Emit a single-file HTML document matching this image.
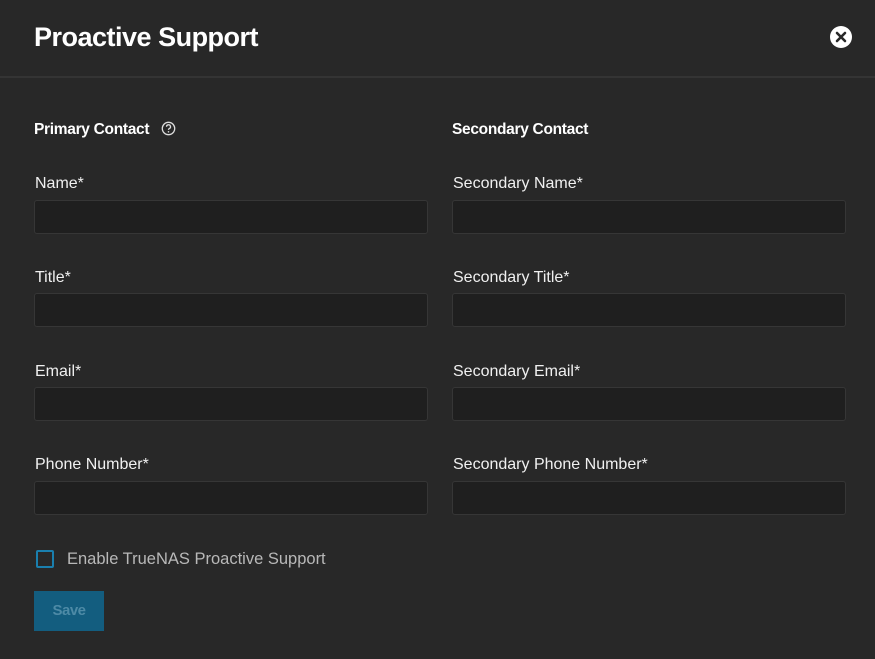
<!DOCTYPE html>
<html><head><style>
*{box-sizing:border-box;margin:0;padding:0}
body{width:875px;height:659px;background:#282828;font-family:"Liberation Sans",sans-serif;color:#fff;position:relative;overflow:hidden}
.h{position:absolute;left:34px;top:22px;font-size:27px;font-weight:bold;letter-spacing:-0.5px}
.line{position:absolute;left:0;top:76px;width:875px;height:2px;background:#343434}
.close{position:absolute;left:830px;top:26px;width:22px;height:22px}
.sec{position:absolute;top:121px;font-size:15.5px;font-weight:bold;letter-spacing:-0.3px}
.lbl{position:absolute;font-size:16px;color:#f0f0f0}
.inp{position:absolute;width:394px;height:34px;background:#1f1f1f;border:1px solid #363636;border-radius:3px}
.cb{position:absolute;left:36px;top:550px;width:18px;height:18px;border:2px solid #1a7fae;border-radius:2px}
.cbl{position:absolute;left:67px;top:550px;font-size:16.5px;color:#b8b8b8}
.btn{position:absolute;left:34px;top:591px;width:70px;height:40px;background:#135d7f;color:#4d8aa6;font-weight:bold;font-size:15px;text-align:center;line-height:40px;letter-spacing:-0.5px}
</style></head><body>
<div class="h">Proactive Support</div>
<svg class="close" viewBox="0 0 22 22"><circle cx="11" cy="11" r="11" fill="#fff"/><path d="M7 7L15 15M15 7L7 15" stroke="#282828" stroke-width="2.6" stroke-linecap="round"/></svg>
<div class="line"></div>
<div class="sec" style="left:34px">Primary Contact <svg width="15" height="15" viewBox="0 0 15 15" style="vertical-align:-2px;margin-left:8px"><circle cx="7.5" cy="7.5" r="6.2" fill="none" stroke="#ddd" stroke-width="1.3"/><path d="M5.5 5.8a2 2 0 1 1 2.6 1.9c-.5.2-.6.6-.6 1.2" fill="none" stroke="#ddd" stroke-width="1.3"/><circle cx="7.5" cy="10.8" r=".8" fill="#ddd"/></svg></div>
<div class="sec" style="left:452px">Secondary Contact</div>

<div class="lbl" style="left:35px;top:175px">Name*</div>
<div class="inp" style="left:34px;top:200px"></div>
<div class="lbl" style="left:453px;top:175px">Secondary Name*</div>
<div class="inp" style="left:452px;top:200px"></div>

<div class="lbl" style="left:35px;top:269px">Title*</div>
<div class="inp" style="left:34px;top:293px"></div>
<div class="lbl" style="left:453px;top:269px">Secondary Title*</div>
<div class="inp" style="left:452px;top:293px"></div>

<div class="lbl" style="left:35px;top:363px">Email*</div>
<div class="inp" style="left:34px;top:387px"></div>
<div class="lbl" style="left:453px;top:363px">Secondary Email*</div>
<div class="inp" style="left:452px;top:387px"></div>

<div class="lbl" style="left:35px;top:456px">Phone Number*</div>
<div class="inp" style="left:34px;top:481px"></div>
<div class="lbl" style="left:453px;top:456px">Secondary Phone Number*</div>
<div class="inp" style="left:452px;top:481px"></div>

<div class="cb"></div>
<div class="cbl">Enable TrueNAS Proactive Support</div>
<div class="btn">Save</div>
</body></html>
